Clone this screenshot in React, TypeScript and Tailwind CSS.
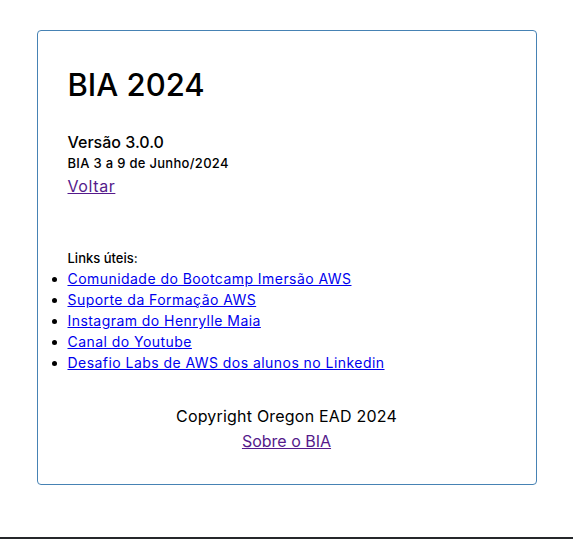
import React from "react";

const links = [
  "Comunidade do Bootcamp Imersão AWS",
  "Suporte da Formação AWS",
  "Instagram do Henrylle Maia",
  "Canal do Youtube",
  "Desafio Labs de AWS dos alunos no Linkedin",
];

export default function App() {
  return (
    <div
      className="min-h-[539px] bg-white flex flex-col text-black"
      style={{ fontFamily: 'Inter, "Noto Sans", sans-serif' }}
    >
      <div className="mx-auto mt-[30px] w-[500px] border border-[#4682b4] rounded-[4px] px-[30px] pt-[30px] pb-[31px]">
        <h1 className="text-[31px] leading-[48px] font-medium">BIA 2024</h1>
        <div className="mt-[22px] text-[16px] leading-[22px] font-medium">Versão 3.0.0</div>
        <div className="text-[13px] leading-[20px] font-medium tracking-[0.3px]">BIA 3 a 9 de Junho/2024</div>
        <a href="#" className="inline-block text-[16px] leading-[26px] tracking-[0.6px] text-[#551a8b] underline">
          Voltar
        </a>
        <div className="mt-[49px] text-[13px] leading-[20px] font-medium">Links úteis:</div>
        <ul className="list-disc ml-[-14px] pl-[14px]">
          {links.map((l) => (
            <li key={l} className="text-[14px] leading-[21px] tracking-[0.45px] marker:text-black">
              <a href="#" className="text-[#0000ee] underline">
                {l}
              </a>
            </li>
          ))}
        </ul>
        <div className="mt-[31px] text-center">
          <div className="text-[16px] leading-[25px] tracking-[0.2px]">Copyright Oregon EAD 2024</div>
          <a href="#" className="inline-block text-[16px] leading-[24px] text-[#551a8b] underline">
            Sobre o BIA
          </a>
        </div>
      </div>
      <div className="flex-1" />
      <div className="h-[2px] bg-[#25272a]" />
    </div>
  );
}
